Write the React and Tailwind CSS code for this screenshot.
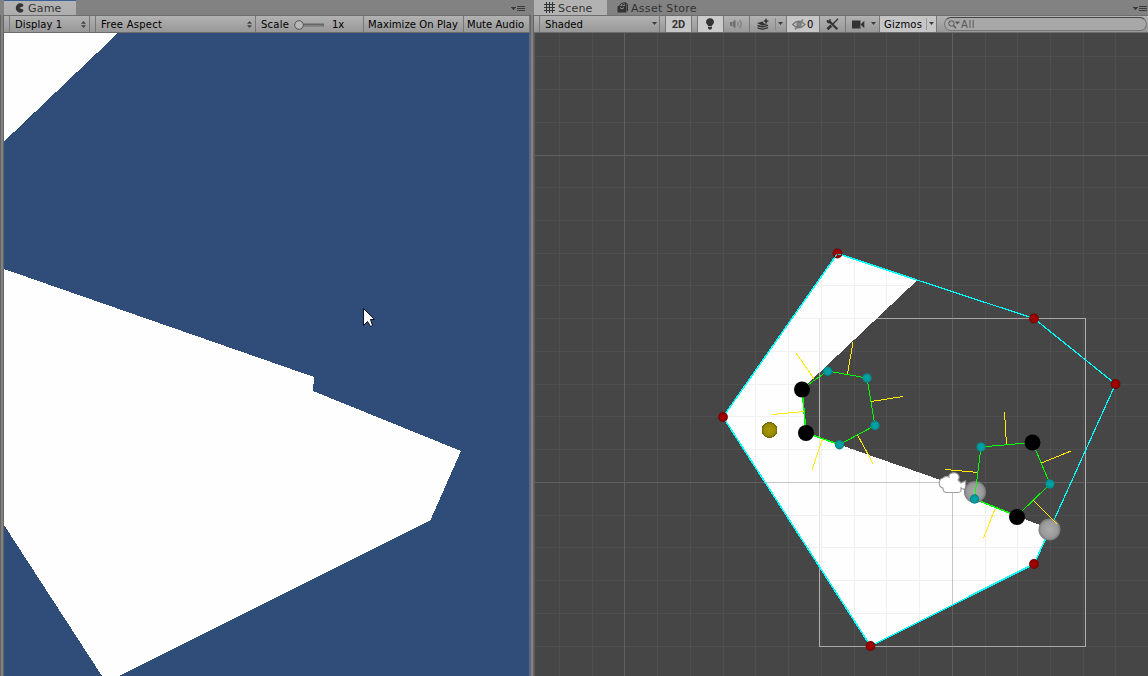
import React from "react";

function Cell({ className = "", children }) {
  return (
    <div className={"flex h-full shrink-0 items-center border-l border-[#777] whitespace-nowrap " + className}>{children}</div>
  );
}

function UpDown({ className = "" }) {
  return (
    <svg className={className} width="5" height="7" viewBox="0 0 5 7" fill="#444">
      <path d="M2.500 0L5 2.800H0zM0 4.200h5L2.500 7z" />
    </svg>
  );
}

function Down({ className = "" }) {
  return (
    <svg className={className} width="5" height="3" viewBox="0 0 5 3" fill="#3c3c3c">
      <path d="M0 0h5L2.500 3z" />
    </svg>
  );
}

function PaneMenu({ className = "" }) {
  return (
    <svg className={className} width="14" height="6" viewBox="0 0 14 6" fill="#3a3a3a" shapeRendering="crispEdges">
      <path d="M0 1h5v1H4v1H3v1H2V3H1V2H0zM6 0h8v1H6zM6 2h8v1H6zM6 4h8v1H6z" />
    </svg>
  );
}

const bar = "flex h-[18px] shrink-0 border-y border-t-[#6e6e6e] border-b-[#6e6e6e] bg-linear-to-b from-[#b2b2b2] to-[#989898] text-[10px] text-black";

function GameView() {
  return (
    <svg className="block" width="526" height="643" viewBox="4 33 526 643" shapeRendering="crispEdges">
      <path d="M4 33h526v643H4z" fill="#304d79" />
      <path d="M4 33H118L4 141.500zM4 269L314 377L313 391L461 451L430.500 520L119 676H102L4 525z" fill="#fefefe" />
      <path d="M529.500 33V676" stroke="#536c93" />
      <path
        d="M363.500 308.500V325.500L367.500 321.500L370.500 326.500L372.500 325.500L370.500 319.500H374.500z"
        fill="#fff" stroke="#0b1022" shapeRendering="auto"
      />
    </svg>
  );
}

const minorX = [559.5, 592.5, 657.5, 690.5, 723.5, 755.5, 788.5, 821.5, 854.5, 886.5, 919.5, 985.5, 1017.5, 1050.5, 1083.5, 1115.5];
const minorY = [56.5, 89.5, 122.5, 187.5, 220.5, 253.5, 285.5, 318.5, 351.5, 384.5, 416.5, 449.5, 515.5, 547.5, 580.5, 613.5, 646.5];
const redNodes = [[837.5, 253.5], [1034, 318.5], [1115.5, 384], [1034, 564], [870.5, 646], [723, 417]];
const tealNodes = [[827.7, 371.3], [867, 378], [875, 425.5], [839.5, 444.7], [981, 447], [1050, 484], [974.5, 499]];
const blackNodes = [[802, 389.5], [806, 433], [1032.5, 442.5], [1017, 517]];
const litArea = "M837.500 253.500L917.500 280L802 389L806 433L975 492V499L1017 516L1050 529L1034 564L870.500 646L723 417z";

function SceneView() {
  return (
    <svg className="block" width="614" height="643" viewBox="534 33 614 643" shapeRendering="crispEdges">
      <defs>
        <radialGradient id="red"><stop offset="0" stopColor="#ac0303" /><stop offset="0.7" stopColor="#930202" /><stop offset="1" stopColor="#6c0000" /></radialGradient>
        <radialGradient id="teal"><stop offset="0" stopColor="#00a6a8" /><stop offset="0.7" stopColor="#009a9c" /><stop offset="1" stopColor="#087b7e" /></radialGradient>
        <radialGradient id="gold"><stop offset="0" stopColor="#a89a00" /><stop offset="0.75" stopColor="#968900" /><stop offset="1" stopColor="#675e0c" /></radialGradient>
        <radialGradient id="gray"><stop offset="0" stopColor="#ababab" /><stop offset="0.75" stopColor="#999999" /><stop offset="1" stopColor="#777777" /></radialGradient>
        <clipPath id="lit"><path d={litArea} /></clipPath>
      </defs>
      <path d="M534 33h614v643H534z" fill="#464646" />
      <path d="M819.500 318.500H1085.500V646.500H819.500z" fill="none" stroke="#b0b0b0" />
      <g stroke="#808080" strokeOpacity="0.140">
        {minorX.map((x) => <path key={x} d={`M${x} 33V676`} />)}
        {minorY.map((y) => <path key={y} d={`M534 ${y}H1148`} />)}
      </g>
      <path d={litArea} fill="#fefefe" />
      <g clipPath="url(#lit)">
        <path d="M819.500 318.500V646M819.500 318.500H917" stroke="#e4e4e4" />
        <g stroke="#f0f0f0">
          {minorX.map((x) => <path key={x} d={`M${x} 33V676`} />)}
          {minorY.map((y) => <path key={y} d={`M534 ${y}H1148`} />)}
        </g>
      </g>
      <path d="M624.500 33V676M952.500 33V676M534 155.500H1148M534 482.500H1148" stroke="#808080" strokeOpacity="0.450" />
      <path d="M534.500 33V676" stroke="#5c5c5c" />
      <path d="M1034 564L870.500 646L723 417L837.500 253.500L917 280M1034 564L1050 529" fill="none" stroke="#00ffff" strokeWidth="1.500" />
      <path d="M917 280L1034 318.500L1115.500 384L1050 529" fill="none" stroke="#00ffff" strokeWidth="1.200" />
      <circle cx="769.500" cy="430" r="8" fill="url(#gold)" />
      <path d="M802 389L827.500 371L867 378L875 425.500L839.500 444.500M981 447L1032.500 442.500L1050 484L1017 516" fill="none" stroke="#00ff00" />
      <path d="M802 389L806 433L839.500 444.500M974.500 499L1017 516" fill="none" stroke="#00ff00" strokeWidth="1.500" />
      <path
        d="M814.500 379.500L796 353M847.500 374L853 342M871 401.500L903 396.500M857.500 435L873 463.500M822.500 439L812 470M804 411.500L772 414.500M1006.500 444.500L1004.500 412M1041.500 463L1071 451M945 469.500L978 472.500M995 509L983.500 538"
        fill="none" stroke="#ffeb04"
      />
      <g shapeRendering="auto">
        <path
          d="M943 478C946 475.500 949 477 949 477C948 473 956 471 958.500 475C960 478 958 480 958 480L961 483L965.500 481V490L961 488V491Q960 492.500 958 492.500H946Q943 492 943 488C938 487 938 479 943 478z"
          fill="#fff" stroke="#a0a0a0" strokeWidth="1.200"
        />
        <circle cx="975" cy="492" r="11" fill="url(#gray)" />
        <circle cx="1049.500" cy="529.500" r="11" fill="url(#gray)" />
      </g>
      <path d="M974.500 499L981 447" stroke="#00ff00" />
      <path d="M1033.500 500.500L1057 524" stroke="#ffeb04" />
      <g shapeRendering="auto">
        {redNodes.map(([x, y]) => <circle key={x} cx={x} cy={y} r="4.900" fill="url(#red)" />)}
        {tealNodes.map(([x, y]) => <circle key={x} cx={x} cy={y} r="4.700" fill="url(#teal)" />)}
        {blackNodes.map(([x, y]) => <circle key={x} cx={x} cy={y} r="8" fill="#000" />)}
      </g>
      <path d="M837 254L835 257M838 254L841 255" stroke="#00ffff" strokeOpacity="0.800" />
    </svg>
  );
}

function GameTab() {
  return (
    <div className="flex w-[72px] shrink-0 items-center border-t border-[#3b5f9b] bg-linear-to-b from-[#b4b4b4] to-[#adadad] pl-[11px]">
      <svg className="shrink-0" width="9" height="10" viewBox="0 0 9 10">
        <path d="M8.300 1.700A4.400 4.700 0 1 0 8.300 8.300V6.600L4.200 5L8.300 3.300z" fill="#333" />
      </svg>
      <span className="ml-[4px] text-[11px] tracking-[0.200px]">Game</span>
    </div>
  );
}

export default function App() {
  return (
    <div className="flex h-[676px] w-[1148px] overflow-hidden bg-[#828282] font-['DejaVu_Sans',sans-serif] leading-none text-[#333]">
      <div className="flex w-[4px] shrink-0 flex-col">
        <div className="h-[15px]" />
        <div className="flex-1 border-x border-[#646464]" />
      </div>
      <section className="flex w-[526px] shrink-0 flex-col">
        <header className="flex h-[15px] shrink-0">
          <GameTab />
          <PaneMenu className="mt-[6px] mr-[5px] ml-auto" />
        </header>
        <div className={bar}>
          <Cell className="ml-[5px] w-[80px] pr-[3px] pl-[5px]">
            <span className="pt-[2px] tracking-[0.100px]">Display 1</span>
            <UpDown className="mt-px ml-auto" />
          </Cell>
          <Cell className="w-[6px]" />
          <Cell className="w-[160px] pr-[3px] pl-[5px]">
            <span className="pt-[2px] tracking-[0.250px]">Free Aspect</span>
            <UpDown className="mt-px ml-auto" />
          </Cell>
          <Cell className="w-[108px] pl-[5px]">
            <span className="w-[33px] pt-[2px] tracking-[0.250px]">Scale</span>
            <svg className="mt-px" width="30" height="10" viewBox="0 0 30 10">
              <path d="M8 5H29.500" stroke="#666" strokeWidth="3" strokeLinecap="round" />
              <path d="M9 5.800H29" stroke="#898989" />
              <circle cx="5" cy="5" r="4.300" fill="#b8b8b8" stroke="#555" />
            </svg>
            <span className="ml-[8px] pt-[2px]">1x</span>
          </Cell>
          <Cell className="w-[100px] pl-[4px]"><span className="pt-[2px] tracking-[0.080px]">Maximize On Play</span></Cell>
          <Cell className="w-[67px] border-r pl-[3px]"><span className="pt-[2px] tracking-[0.050px]">Mute Audio</span></Cell>
        </div>
        <GameView />
      </section>
      <div className="flex w-[4px] shrink-0 flex-col">
        <div className="h-[15px]" />
        <div className="flex-1 border-x border-[#646464]" />
      </div>
      <section className="flex w-[614px] shrink-0 flex-col">
        <header className="flex h-[15px] shrink-0 items-center">
          <div className="flex h-full w-[73px] shrink-0 items-center bg-[#b2b2b2] pl-[10px]">
            <svg className="shrink-0" width="11" height="11" viewBox="0 0 11 11" stroke="#333" shapeRendering="crispEdges">
              <path d="M2.500 0V11M5.500 0V11M8.500 0V11M0 2.500H11M0 5.500H11M0 8.500H11" />
            </svg>
            <span className="ml-[3px] pt-px text-[11px] tracking-[0.200px]">Scene</span>
          </div>
          <svg className="ml-[10px] shrink-0" width="11" height="11" viewBox="0 0 11 11">
            <path d="M2.500 4L4 1.500L8.500 .600V4M5 3L7.500 2.200L10 1.500V4" fill="none" stroke="#333" />
            <path d="M.500 4H9.500V10.500H.500z" fill="#333" />
            <path d="M10.500 2.500V9" stroke="#333" />
            <path d="M3 5.500L5 7L7 5.500" stroke="#999" fill="none" />
          </svg>
          <span className="ml-[3px] pt-px text-[11px] tracking-[0.300px] whitespace-nowrap">Asset Store</span>
          <PaneMenu className="mt-[2px] mr-[1px] ml-auto" />
        </header>
        <div className={bar}>
          <Cell className="ml-[5px] w-[120px] pr-[2px] pl-[5px]">
            <span className="pt-[2px] tracking-[0.050px]">Shaded</span>
            <Down className="mb-px ml-auto" />
          </Cell>
          <Cell className="w-[6px]" />
          <Cell className="w-[26px] justify-center bg-[#c6c6c6]">
            <span className="pt-px font-['Roboto',sans-serif] text-[11px] font-bold text-[#333]">2D</span>
          </Cell>
          <Cell className="w-[6px]" />
          <Cell className="w-[26px] bg-[#cbcbcb] pl-[8px]">
            <svg width="8" height="12" viewBox="0 0 8 12" fill="#333">
              <path d="M4 .300A3.800 3.800 0 0 0 0 4C0 6 2 6.500 2 8H6C6 6.500 8 6 8 4A3.800 3.800 0 0 0 4 .300zM2 8.700H6V10.300L5 11.500H3L2 10.300z" />
            </svg>
          </Cell>
          <Cell className="w-[26px] pl-[6px]">
            <svg width="13" height="10" viewBox="0 0 13 10">
              <path d="M0 3H2V7H0zM2.500 3L5.500 .500V9.500L2.500 7z" fill="#707070" />
              <path d="M7.500 3Q9 5 7.500 7M9.500 1Q13 5 9.500 9" fill="none" stroke="#808080" strokeWidth="1.300" />
            </svg>
          </Cell>
          <Cell className="w-[37px] pl-[7px]">
            <svg width="14" height="12" viewBox="0 0 14 12" fill="#333">
              <path d="M0 5L5.500 3.500L7 5.500L11 6L5.500 7.800z" />
              <path d="M.500 7.500L5.500 9L11 7.300M.500 9.800L5.500 11.300L11 9.600" fill="none" stroke="#333" strokeWidth="1.400" />
              <path d="M9 0L10 2.200L12.200 3L10 4L9 6L8 4L6 3L8 2.200z" />
            </svg>
            <div className="ml-[4px] h-[12px] w-[3px] border-l border-[#888]" />
            <Down className="mb-px" />
          </Cell>
          <Cell className="w-[33px] bg-[#c6c6c6] pl-[5px]">
            <svg width="14" height="11" viewBox="0 0 14 11" fill="none" stroke="#777" strokeWidth="1.300">
              <path d="M.700 5.500Q6.500 -1 13 5.500Q6.500 12 .700 5.500zM11 .500L3 10.500" />
              <circle cx="7" cy="5.300" r="2" fill="#888" />
            </svg>
            <span className="ml-px pt-[2px]">0</span>
          </Cell>
          <Cell className="w-[26px] pl-[6px]">
            <svg width="13" height="13" viewBox="0 0 13 13" fill="none" stroke="#333">
              <path d="M3.500 3.500L11.300 11.300" strokeWidth="2.200" />
              <path d="M.800 2.500L3.200 4L4.300 1.200M1.200 3Q3 6 5 3.500" strokeWidth="1.600" />
              <path d="M12 .800L6.500 6.500" strokeWidth="1.300" />
              <path d="M5.300 7.500L1.500 11.300" strokeWidth="2.800" />
            </svg>
          </Cell>
          <Cell className="w-[34px] pl-[6px]">
            <svg className="mt-px" width="14" height="9" viewBox="0 0 14 9" fill="#333">
              <path d="M0 .500H8.500V8.500H0zM9 4L12.300 .700V8.300L9 5z" />
            </svg>
            <Down className="mb-px ml-[5px]" />
          </Cell>
          <Cell className="w-[58px] border-r bg-[#c6c6c6] pl-[4px]">
            <span className="w-[42px] pt-[2px] tracking-[0.200px]">Gizmos</span>
            <div className="h-[12px] w-[3px] border-l border-[#999]" />
            <Down className="mb-px" />
          </Cell>
          <div className="mt-px ml-[7px] flex h-[14px] w-[203px] shrink-0 items-center rounded-full border border-[#757575] border-t-[#444] bg-[#a8a8a8] pl-[3px] text-[#555]">
            <svg width="12" height="9" viewBox="0 0 12 9" fill="none" stroke="#555">
              <circle cx="3.500" cy="3.500" r="2.700" />
              <path d="M5.500 5.500L8 8.200" strokeWidth="1.300" />
              <path d="M7 1.500H12L9.500 4.500z" fill="#555" stroke="none" />
            </svg>
            <span className="ml-px pt-px tracking-[0.600px]">All</span>
          </div>
        </div>
        <SceneView />
      </section>
    </div>
  );
}
